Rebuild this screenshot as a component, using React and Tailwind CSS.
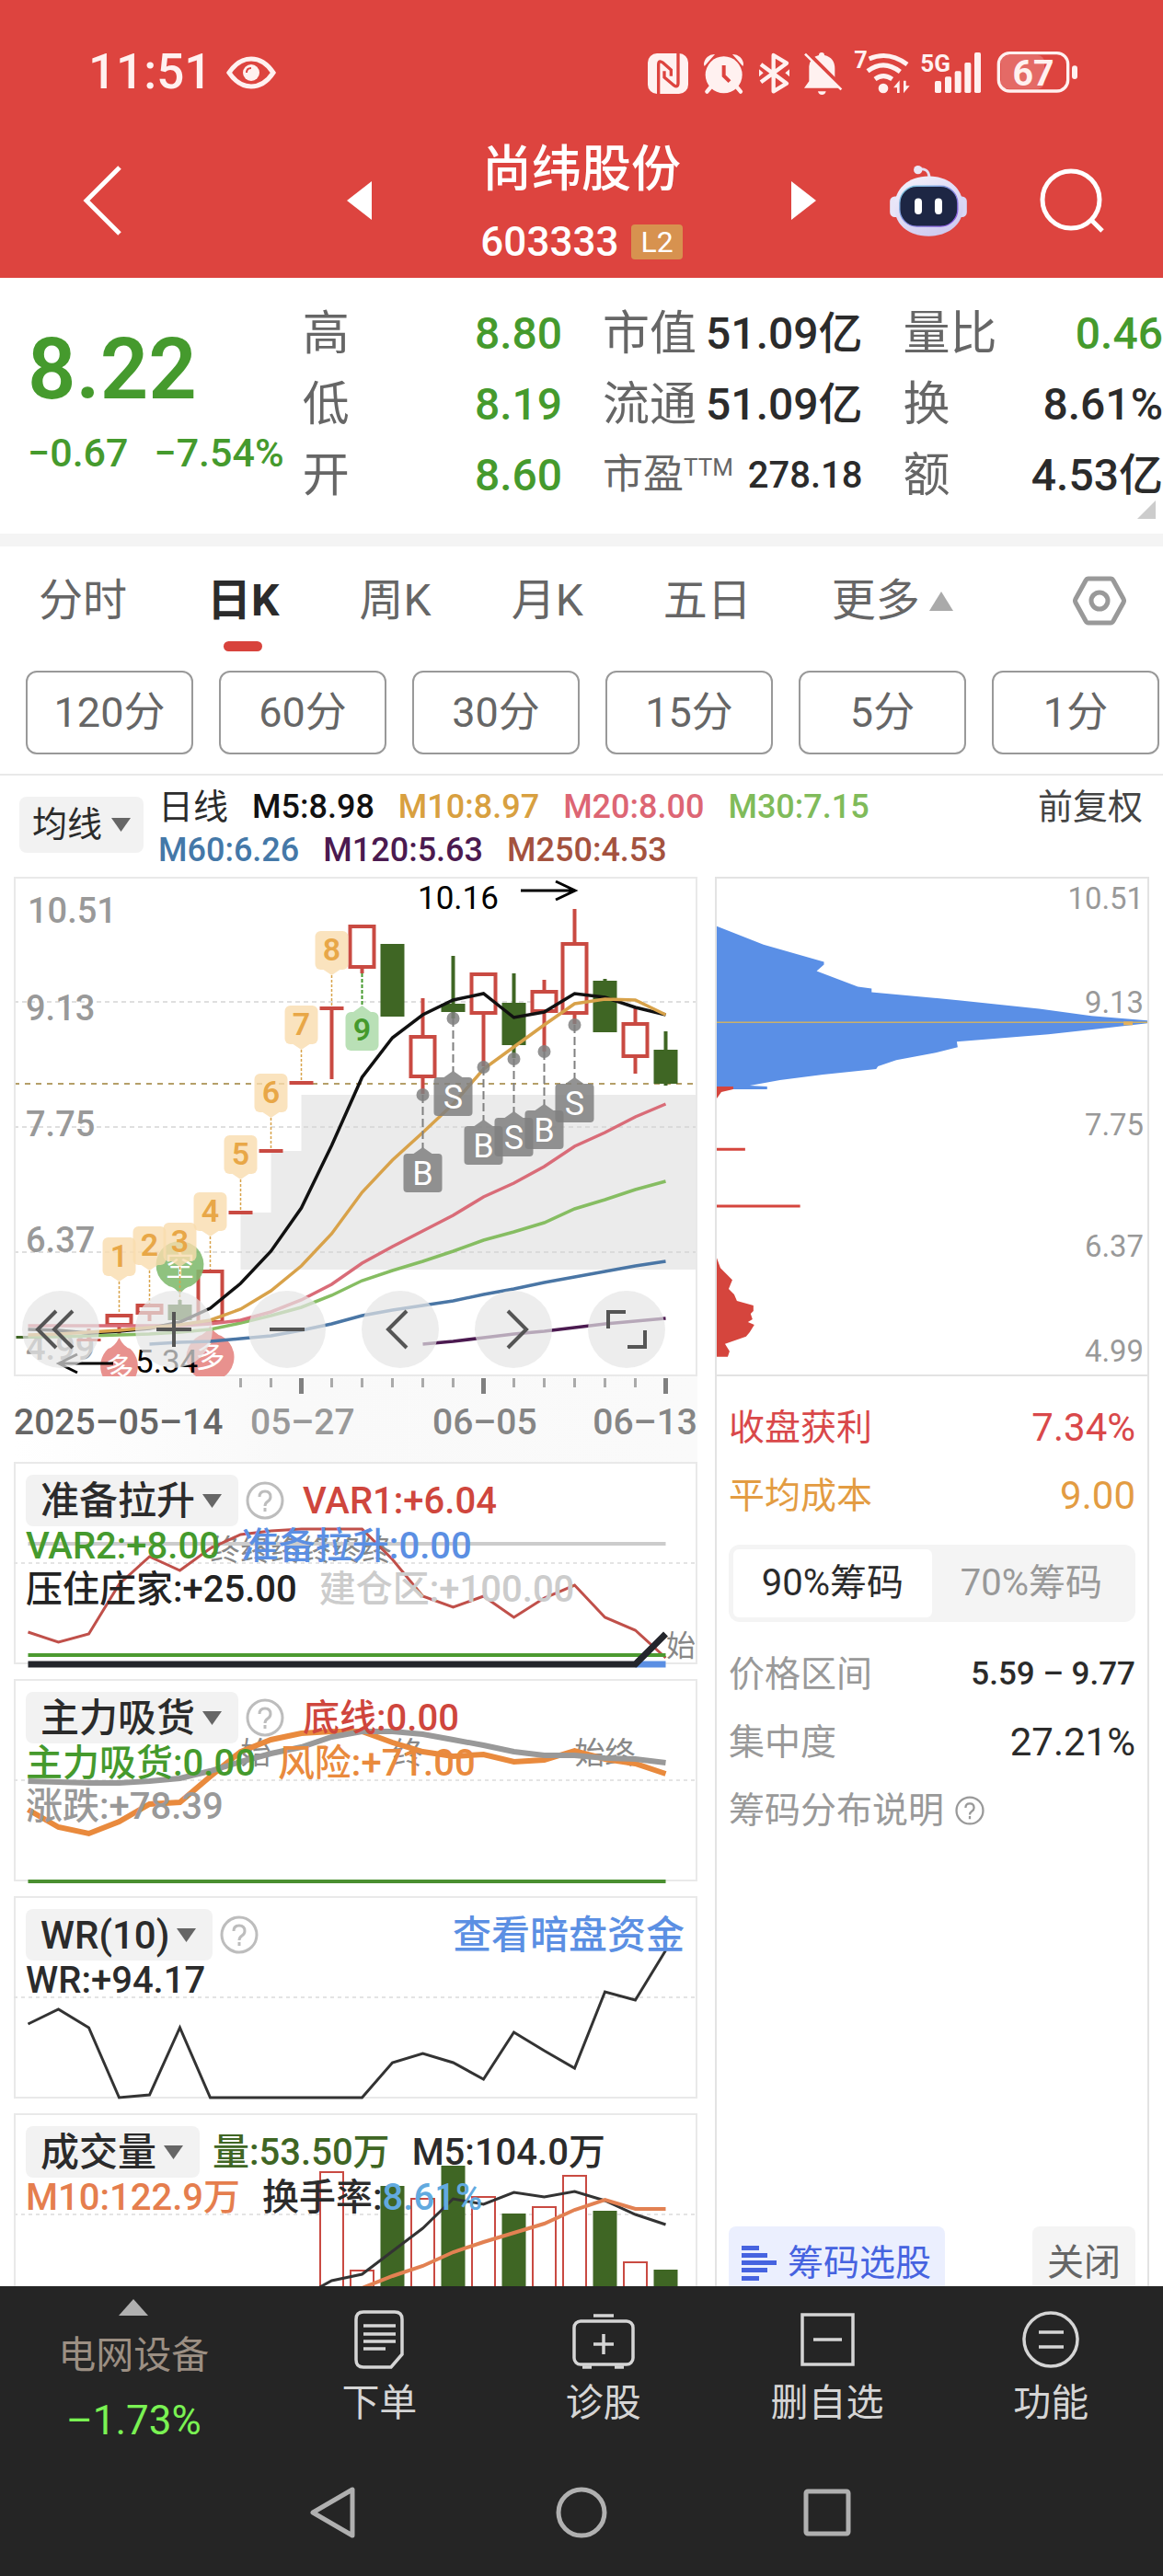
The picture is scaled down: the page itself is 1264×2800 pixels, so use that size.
import React from 'react';
import clsx from 'clsx';

const STEP = 33;
const cx = (i) => 15.5 + STEP * i;
const toPoints = (values, start = 0) => values.map((y, i) => `${cx(i + start)},${y}`).join(' ');

const RED = '#c94a42';
const GREEN = '#3f6624';

const quoteColumns = [
  [
    { label: '高', value: '8.80', up: true },
    { label: '低', value: '8.19', up: true },
    { label: '开', value: '8.60', up: true },
  ],
  [
    { label: '市值', value: '51.09亿' },
    { label: '流通', value: '51.09亿' },
    { label: '市盈', sup: 'TTM', value: '278.18', small: true },
  ],
  [
    { label: '量比', value: '0.46', up: true },
    { label: '换', value: '8.61%' },
    { label: '额', value: '4.53亿' },
  ],
];

const minutes = ['120分', '60分', '30分', '15分', '5分', '1分'];

// [index, body top, body bottom, wick top, wick bottom, kind]
const candles = [
  [0, 499, 502, 499, 502, 'down'],
  [2, 502, 505, 491, 505, 'flat'],
  [3, 475, 488, 475, 497, 'up'],
  [4, 464, 475, 464, 483, 'up'],
  [5, 465, 482, 460, 482, 'down'],
  [6, 427, 485, 427, 485, 'up'],
  [7, 363, 367, 363, 367, 'flat'],
  [8, 296, 300, 296, 300, 'flat'],
  [9, 222, 226, 222, 226, 'flat'],
  [10, 141, 145, 141, 220, 'flat'],
  [11, 52, 99, 52, 105, 'up'],
  [12, 73, 152, 73, 152, 'down'],
  [13, 172, 218, 132, 236, 'up'],
  [14, 138, 147, 86, 154, 'down'],
  [15, 104, 149, 104, 206, 'up'],
  [16, 137, 183, 105, 197, 'down'],
  [17, 123, 147, 112, 190, 'up'],
  [18, 71, 149, 35, 160, 'up'],
  [19, 113, 169, 111, 169, 'down'],
  [20, 158, 196, 143, 214, 'up'],
  [21, 188, 225, 168, 227, 'down'],
];

const averages = [
  { color: '#4a76a5', start: 4, values: [508, 506, 505, 502, 499, 493, 486, 477, 471, 466, 461, 454, 448, 441, 435, 429, 423, 418] },
  { color: '#4b1a50', start: 13, values: [508, 505, 501, 497, 494, 490, 486, 483, 480] },
  { color: '#86bd62', start: 0, values: [500, 500, 499, 498, 497, 495, 492, 485, 477, 468, 455, 439, 428, 418, 407, 395, 386, 376, 361, 351, 340, 331] },
  { color: '#d96c78', start: 0, values: [488, 488, 488, 488, 488, 488, 486, 482, 473, 460, 443, 420, 402, 385, 368, 348, 333, 315, 293, 278, 261, 247] },
  { color: '#111', start: 0, values: [492, 493, 496, 494, 491, 484, 469, 442, 407, 360, 292, 218, 175, 150, 134, 127, 153, 147, 127, 131, 142, 150] },
  { color: '#d8a24a', start: 0, values: [498, 497, 495, 493, 490, 487, 482, 470, 450, 423, 388, 343, 308, 278, 247, 209, 185, 161, 138, 133, 134, 150] },
];

// [index, number, tag top, candle top]
const countTags = [
  [3, 1, 392, 475],
  [4, 2, 380, 464],
  [5, 3, 376, 460],
  [6, 4, 343, 427],
  [7, 5, 281, 363],
  [8, 6, 214, 296],
  [9, 7, 140, 222],
  [10, 8, 59, 141],
];

// [index, letter, box top, dot y]
const signals = [
  [13, 'B', 301, 237],
  [14, 'S', 218, 154],
  [15, 'B', 271, 207],
  [16, 'S', 262, 198],
  [17, 'B', 254, 190],
  [18, 'S', 225, 161],
];

const volumes = [
  [10, 64, 'up'],
  [11, 171, 'up'],
  [12, 79, 'down'],
  [13, 93, 'up'],
  [14, 57, 'down'],
  [15, 91, 'up'],
  [16, 109, 'down'],
  [17, 102, 'up'],
  [18, 68, 'up'],
  [19, 106, 'down'],
  [20, 162, 'up'],
  [21, 170, 'down'],
];

const StatusIcons = () => (
  <svg className="h-[50px] w-[468px] overflow-visible" viewBox="39 42 1404 150" fill="#fff1f0" aria-hidden="true">
    <rect x="39" y="54" width="132" height="132" rx="30" />
    <path
      d="M74 188V92q0-18 14-8l27 24v20M138 52v98q0 18-14 8l-31-26v-20"
      fill="none"
      stroke="#dd443f"
      strokeWidth="10"
    />
    <circle cx="287" cy="124" r="60" />
    <path d="M246 162l-14 17M328 162l14 17" stroke="#fff1f0" strokeWidth="13" strokeLinecap="round" />
    <path d="M222 90a34 34 0 0 1 36-33l-34 39zM351 90a34 34 0 0 0-36-33l34 39z" />
    <path d="M287 93v34l19 19" fill="none" stroke="#dd443f" strokeWidth="12" />
    <path d="M408 90l84 62-43 26V60l43 26-84 62" fill="none" stroke="#fff1f0" strokeWidth="13" strokeLinejoin="round" />
    <path d="M402 106v24l14-12zM501 106v24l-14-12z" />
    <path d="M549 167l16-22V96q4-30 32-36 0-9 9-9t9 9q34 8 34 44v42l16 21z" />
    <path d="M594 178h26q-2 11-13 11t-13-11z" />
    <path d="M556 48l122 122" stroke="#dd443f" strokeWidth="14" />
    <path d="M552 56l118 116" stroke="#fff1f0" strokeWidth="8" />
    <text x="712" y="101" fontSize="76" fontWeight="700">7</text>
    <path d="M761 72q62-28 124 18M756 112q52-40 106 2M780 138q27-20 56 0" fill="none" stroke="#fff1f0" strokeWidth="15" />
    <circle cx="807" cy="168" r="16" />
    <path d="M840 166l20-24v41h-8v-17zM893 160l-20 24v-41h8v17z" />
    <text x="928" y="114" fontSize="78" fontWeight="700">5G</text>
    <rect x="975" y="144" width="21" height="39" rx="5" />
    <rect x="1008" y="130" width="21" height="53" rx="5" />
    <rect x="1040" y="112" width="21" height="71" rx="5" />
    <rect x="1072" y="84" width="21" height="99" rx="5" />
    <rect x="1104" y="51" width="21" height="132" rx="5" />
    <rect x="1190" y="60" width="142" height="110" rx="22" fillOpacity="0.22" />
    <rect x="1183" y="53" width="226" height="124" rx="36" fill="none" stroke="#fff1f0" strokeWidth="10" />
    <rect x="1422" y="94" width="18" height="44" rx="9" />
    <text x="1296" y="160" fontSize="118" fontWeight="700" textAnchor="middle">67</text>
  </svg>
);

const Robot = () => (
  <svg className="h-[79px] w-[86px]" viewBox="78 48 258 238" aria-hidden="true">
    <defs>
      <linearGradient id="shell" x1="0" y1="0" x2="0.6" y2="1">
        <stop offset="0" stopColor="#f6f3fc" />
        <stop offset="1" stopColor="#cfcbf0" />
      </linearGradient>
      <linearGradient id="rim" x1="0" y1="0" x2="1" y2="1">
        <stop offset="0" stopColor="#7fd0e0" />
        <stop offset="1" stopColor="#8a4be0" />
      </linearGradient>
    </defs>
    <path d="M172 64q36-8 38 26" fill="none" stroke="#e6def2" strokeWidth="9" />
    <circle cx="173" cy="65" r="14" fill="#eae6f6" />
    <rect x="81" y="152" width="40" height="68" rx="16" fill="#e8e5f7" />
    <rect x="292" y="152" width="41" height="68" rx="16" fill="#d9d6f5" />
    <path d="M208 86c70 0 113 44 113 100s-46 96-113 96S96 244 96 186 140 86 208 86z" fill="url(#shell)" />
    <rect x="113" y="118" width="190" height="132" rx="56" fill="#1d2644" stroke="url(#rim)" strokeWidth="4" />
    <rect x="162" y="158" width="24" height="53" rx="12" fill="#fff" />
    <rect x="228" y="158" width="24" height="53" rx="12" fill="#fff" />
  </svg>
);

const Header = () => (
  <header className="bg-[#dd443f] text-white">
    <div className="flex h-[158px] items-center justify-between pr-[92px] pl-24">
      <div className="flex items-center gap-4 text-[53px] font-medium text-[#fff1f0]">
        <span>11:51</span>
        <svg className="h-9 w-[54px]" viewBox="0 0 54 36" fill="none" stroke="#fff1f0" strokeWidth="5" aria-hidden="true">
          <path d="M3 18Q13 3 27 3t24 15Q41 33 27 33T3 18z" />
          <circle cx="27" cy="18" r="9" fill="#fff1f0" stroke="none" />
          <path d="M22 18q0-5 5-5" stroke="#dd443f" strokeWidth="2" />
        </svg>
      </div>
      <StatusIcons />
    </div>
    <div className="grid h-36 grid-cols-[1fr_456px_1fr] grid-rows-1 items-center pb-6">
      <div className="flex items-center justify-between pl-[90px]">
        <button aria-label="返回">
          <svg className="h-[76px] w-[42px]" viewBox="0 0 42 76" fill="none" stroke="#fff" strokeWidth="5" aria-hidden="true">
            <path d="M40 2L4 38l36 36" />
          </svg>
        </button>
        <button aria-label="上一只">
          <svg className="h-[42px] w-[27px]" viewBox="0 0 27 42" fill="#fff" aria-hidden="true"><path d="M27 0v42L0 21z" /></svg>
        </button>
      </div>
      <div className="flex flex-col items-center pt-3">
        <h1 className="text-[54px] leading-[78px] font-medium">尚纬股份</h1>
        <div className="flex items-center gap-3.5 text-[44px] leading-[78px] font-medium">
          <span>603333</span>
          <span className="rounded-sm bg-[#d7924f] px-2.5 text-[32px] leading-[38px] font-normal">L2</span>
        </div>
      </div>
      <div className="flex items-center justify-between pr-16">
        <button aria-label="下一只">
          <svg className="h-[42px] w-[27px]" viewBox="0 0 27 42" fill="#fff" aria-hidden="true"><path d="M0 0v42l27-21z" /></svg>
        </button>
        <button aria-label="助手"><Robot /></button>
        <button aria-label="搜索">
          <svg className="h-[70px] w-[70px]" viewBox="0 0 70 70" fill="none" stroke="#fff" strokeWidth="5" aria-hidden="true">
            <circle cx="34" cy="34" r="31" />
            <path d="M56 56l12 12" />
          </svg>
        </button>
      </div>
    </div>
  </header>
);

const Quote = () => (
  <section className="relative flex h-[278px]">
    <div className="w-[26%] pt-[46px] pl-[30px] text-[#459a2d]">
      <div className="text-[92px] leading-[108px] font-semibold">8.22</div>
      <div className="flex gap-7 text-[43px] leading-[72px] font-medium whitespace-nowrap">
        <span>−0.67</span>
        <span>−7.54%</span>
      </div>
    </div>
    <div className="grid flex-1 grid-cols-3 gap-11 pt-[22px]">
      {quoteColumns.map((rows, c) => (
        <dl key={c}>
          {rows.map((row) => (
            <div key={row.label} className="flex items-center justify-between leading-[77px] whitespace-nowrap">
              <dt className={clsx('flex text-[#666]', row.small ? 'text-[44px]' : 'text-[51px]')}>
                {row.label}
                {row.sup && <span className="-mt-2 text-[26px]">{row.sup}</span>}
              </dt>
              <dd className={clsx('font-medium', row.small ? 'text-[40px]' : 'text-[48px]', row.up ? 'text-[#459a2d]' : 'text-[#2b2b2b]')}>
                {row.value}
              </dd>
            </div>
          ))}
        </dl>
      ))}
    </div>
    <svg className="absolute right-2 bottom-4 size-5" viewBox="0 0 20 20" fill="#ccc" aria-hidden="true"><path d="M20 0v20H0z" /></svg>
  </section>
);

const Periods = () => (
  <section className="border-t-14 border-b-2 border-t-[#f4f4f4] border-b-[#e9e9e9] pb-[21px]">
    <nav className="flex h-[116px] items-center gap-[87px] pt-0.5 pr-10 pl-[42px] text-[48px] text-[#666]">
      <button>分时</button>
      <button className="relative h-full font-bold text-[#2b2b2b]">
        日K
        <span className="absolute bottom-0.5 left-1/2 h-[11px] w-[42px] -translate-x-1/2 rounded-full bg-[#d8433c]" />
      </button>
      <button>周K</button>
      <button>月K</button>
      <button>五日</button>
      <button className="flex items-center gap-2.5">
        更多
        <svg className="h-[21px] w-[26px]" viewBox="0 0 26 21" fill="#aaa" aria-hidden="true"><path d="M13 0l13 21H0z" /></svg>
      </button>
      <button className="ml-auto" aria-label="设置">
        <svg className="h-[54px] w-[58px]" viewBox="0 0 58 54" fill="none" stroke="#999" strokeWidth="5" strokeLinejoin="round" aria-hidden="true">
          <path d="M17 3h24q2 0 3 2l11 20q1 2 0 4L44 49q-1 2-3 2H17q-2 0-3-2L3 29q-1-2 0-4L14 5q1-2 3-2z" />
          <circle cx="29" cy="27" r="9" />
        </svg>
      </button>
    </nav>
    <div className="mt-[19px] flex gap-7 pr-1 pl-7">
      {minutes.map((m) => (
        <button key={m} className="h-[91px] flex-1 rounded-xl border-2 border-[#999] text-[45px] text-[#666]">{m}</button>
      ))}
    </div>
  </section>
);

const Caret = () => (
  <svg className="h-[15px] w-[21px]" viewBox="0 0 21 15" fill="#666" aria-hidden="true"><path d="M0 0h21L10.500 15z" /></svg>
);

const AverageBar = () => (
  <section className="flex h-[110px] items-start pt-[11px] pr-[22px] pl-[21px] text-[36px] leading-[47px] font-medium">
    <button className="mt-3 flex h-[61px] w-[135px] items-center justify-center gap-2.5 rounded-lg bg-[#f2f2f2] text-[38px] font-normal text-[#2b2b2b]">
      均线<Caret />
    </button>
    <div className="ml-4 flex-1">
      <div className="flex gap-[26px]">
        <span className="text-[38px] font-normal text-[#2b2b2b]">日线</span>
        <span className="text-[#111]">M5:8.98</span>
        <span className="text-[#d8a040]">M10:8.97</span>
        <span className="text-[#dd6674]">M20:8.00</span>
        <span className="text-[#80bb5a]">M30:7.15</span>
      </div>
      <div className="flex gap-[26px]">
        <span className="text-[#4478a8]">M60:6.26</span>
        <span className="text-[#4b1a50]">M120:5.63</span>
        <span className="text-[#a4523e]">M250:4.53</span>
      </div>
    </div>
    <button className="text-[38px] font-normal text-[#444]">前复权</button>
  </section>
);

const Candle = ({ data: [i, top, bottom, high, low, kind] }) => {
  const color = kind === 'down' ? GREEN : RED;
  const x = cx(i);
  return (
    <g>
      <path d={`M${x} ${high}V${low}`} stroke={color} strokeWidth="4" />
      {kind === 'up' ? (
        <rect x={x - 13} y={top + 2} width="26" height={bottom - top - 3} fill="#fff" stroke={color} strokeWidth="4" />
      ) : (
        <rect x={x - 13} y={top} width="26" height={bottom - top} fill={color} />
      )}
    </g>
  );
};

const KLine = () => (
  <svg className="block w-full" viewBox="0 0 743 543" aria-label="日K">
    <path d="M246.500 427V365H279.500V298H312.500V237H743V427z" fill="#ebebeb" />
    <path d="M0 136H743M0 272H743M0 408H743" stroke="#d5d5d5" strokeWidth="1.500" strokeDasharray="5 4" />
    <path d="M0 225H743" stroke="#b59f68" strokeWidth="2" strokeDasharray="6 6" />
    <rect x="1" y="1" width="741" height="541" fill="none" stroke="#e9e9e9" strokeWidth="2" />
    <g fill="#999" fontSize="38" fontWeight="500">
      <text x="15" y="50">10.51</text>
      <text x="13" y="156">9.13</text>
      <text x="13" y="282">7.75</text>
      <text x="13" y="408">6.37</text>
      <text x="13" y="525">4.99</text>
    </g>
    {candles.map((c) => <Candle key={c[0]} data={c} />)}
    <g fontSize="32" textAnchor="middle">
      <path d="M180.500 454q-5-8-12-9a26 26 0 1 1 24 0q-7 1-12 9z" fill="#80b96d" fillOpacity="0.88" />
      <text x="180.500" y="434" fill="#fff">空</text>
      <path d="M114.500 501q5 10 12 12a26 26 0 0 1 6 30h-36a26 26 0 0 1 6-30q7-2 12-12z" fill="#e8918e" />
      <text x="114.500" y="546" fill="#fff">多</text>
      <path d="M213.500 488q5 9 12 11a26 26 0 1 1-24 0q7-2 12-11z" fill="#e8918e" />
      <text x="213.500" y="533" fill="#fff">多</text>
    </g>
    {averages.map((a) => (
      <polyline key={a.color} points={toPoints(a.values, a.start)} fill="none" stroke={a.color} strokeWidth="3.500" />
    ))}
    {countTags.map(([i, n, top, end]) => (
      <g key={n}>
        <path d={`M${cx(i)} ${top + 48}V${end}`} stroke="#d8a24a" strokeWidth="1.500" strokeDasharray="3 2" />
        <rect x={cx(i) - 18} y={top} width="36" height="42" rx="6" fill="#f9dcae" fillOpacity="0.8" />
        <path d={`M${cx(i) - 9} ${top + 42}h18l-9 6z`} fill="#f9dcae" fillOpacity="0.8" />
        <text x={cx(i)} y={top + 32} fontSize="34" fontWeight="600" fill="#e8a747" textAnchor="middle">{n}</text>
      </g>
    ))}
    <path d="M378.500 105V140" stroke="#459a2d" strokeWidth="2" strokeDasharray="4 2" />
    <path d="M369 147l9.500-7 9.500 7z" fill="#b9e0b6" />
    <rect x="360.500" y="147" width="36" height="42" rx="6" fill="#b9e0b6" />
    <text x="378.500" y="178" fontSize="34" fontWeight="600" fill="#459a2d" textAnchor="middle">9</text>
    {signals.map(([i, letter, top, dot]) => (
      <g key={i} fill="#808080" fillOpacity="0.85">
        <circle cx={cx(i)} cy={dot} r="7" />
        <path d={`M${cx(i)} ${dot}V${top - 6}`} stroke="#808080" strokeWidth="2" strokeDasharray="9 4" />
        <path d={`M${cx(i) - 10} ${top}l10-7 10 7z`} />
        <rect x={cx(i) - 21} y={top} width="42" height="42" rx="4" />
        <text x={cx(i)} y={top + 34} fontSize="36" fill="#fff" fillOpacity="1" textAnchor="middle">{letter}</text>
      </g>
    ))}
    <g fontSize="35" fill="#000">
      <text x="439" y="35">10.16</text>
      <text x="132" y="539">5.34</text>
    </g>
    <path d="M551 15h58M589 5l21 10-21 10M108 529H50M69 519l-20 10 20 10" fill="none" stroke="#000" strokeWidth="3" />
  </svg>
);

const chartTools = [
  { label: '最左', path: 'M27 23L7 43l20 20M45 23L25 43l20 20', box: '-10 1 84 84' },
  { label: '放大', path: 'M42 23v38M23 42h38', box: '0 0 84 84' },
  { label: '缩小', path: 'M23 42h38', box: '0 0 84 84' },
  { label: '向左', path: 'M49 22L29 42l20 20', box: '0 0 84 84' },
  { label: '向右', path: 'M36 22l20 20-20 20', box: '0 0 84 84' },
  { label: '全屏', path: 'M22 41V23h19M62 43v18H43', box: '0 0 84 84' },
];

const ticks = Array.from({ length: 15 }, (_, k) => k + 7);

const DateAxis = () => (
  <svg className="block w-full" viewBox="0 0 743 93" aria-hidden="true">
    <defs>
      <linearGradient id="shade" x1="0" x2="1" y1="0" y2="0">
        <stop offset="0" stopColor="#fff" />
        <stop offset="0.400" stopColor="#f9f9f9" />
        <stop offset="1" stopColor="#fafafa" />
      </linearGradient>
    </defs>
    <rect width="743" height="93" fill="url(#shade)" />
    {ticks.map((i) => {
      const major = i % 6 === 3;
      return <path key={i} d={`M${cx(i)} 2v${major ? 17 : 10}`} stroke={major ? '#808080' : '#aaa'} strokeWidth={major ? 5 : 3} />;
    })}
    <g fontSize="39" fontWeight="500" fill="#858585">
      <text x="0" y="63" fill="#666">2025–05–14</text>
      <text x="257" y="63" fill="#999">05–27</text>
      <text x="455" y="63">06–05</text>
      <text x="743" y="63" textAnchor="end">06–13</text>
    </g>
  </svg>
);

const Help = ({ className }) => (
  <svg className={className} viewBox="0 0 42 42" fill="none" stroke="currentColor" strokeWidth="3" aria-hidden="true">
    <circle cx="21" cy="21" r="19" />
    <path d="M15 17q0-6 6-6t6 6q0 3-3 5t-3 5M21 29v4" />
  </svg>
);

const Indicator = ({ name, help = true, last, first, lines = [], action, children }) => (
  <article className={clsx('relative border-2 border-[#e9e9e9] text-[40px] leading-[47px] font-medium whitespace-nowrap', last ? 'h-[188px] overflow-hidden border-b-0' : 'h-[220px]')}>
    <svg className="absolute -inset-x-0.5 -top-0.5 h-[220px] w-[calc(100%+4px)] overflow-visible" viewBox="0 0 743 220" aria-hidden="true">
      <path d="M0 110H743" stroke="#e4e4e4" strokeWidth="2" strokeDasharray="4 4" />
      {children}
    </svg>
    <div className="relative pt-3.5 pr-3 pl-[11px]">
      <div className="flex h-[52px] items-center gap-2">
        <button className="flex h-14 items-center gap-2 rounded-lg bg-[#f2f2f2] pr-[18px] pl-4 text-[42px] font-medium text-[#2b2b2b]">
          {name}<Caret />
        </button>
        {help && <Help className="size-[42px] text-[#bdbdbd]" />}
        <div className={clsx('flex gap-6', help ? 'ml-3' : 'ml-1.5')}>{first}</div>
        {action && <a href="#funds" className="ml-auto text-[42px] text-[#5b8fe3]">{action}</a>}
      </div>
      {lines.map((line, i) => (
        <div key={i} className="flex gap-6">{line}</div>
      ))}
    </div>
  </article>
);

const Indicators = () => (
  <div className="flex flex-col gap-4">
    <Indicator
      name="准备拉升"
      first={<span className="text-[#cf463d]">VAR1:+6.04</span>}
      lines={[
        <>
          <span className="text-[#459a2d]">VAR2:+8.00</span>
          <span className="text-[#5b8fe3]">准备拉升:0.00</span>
        </>,
        <>
          <span className="text-[#222]">压住庄家:+25.00</span>
          <span className="text-[#ccc]">建仓区:+100.00</span>
        </>,
      ]}
    >
      <g fontSize="32" fontWeight="400" fill="#888">
        {[6, 7, 8, 9, 10, 11].map((i) => <text key={i} x={cx(i)} y="107">终</text>)}
        <text x="709" y="211">始</text>
      </g>
      <path d="M15.500 89H708.500" stroke="#ccc" strokeWidth="4" />
      <polyline points={toPoints([185, 196, 187, 133, 103, 118, 94, 79, 75, 73, 73, 73, 106, 146, 158, 146, 169, 148, 134, 169, 183, 213])} fill="none" stroke="#c0504a" strokeWidth="3" />
      <path d="M15.500 210H708.500" stroke="#4c9a30" strokeWidth="4" />
      <path d="M675.500 220H708.500" stroke="#5b8fe3" strokeWidth="7" />
      <path d="M15.500 220H675.500L708.500 187" fill="none" stroke="#24262c" strokeWidth="7" />
    </Indicator>

    <Indicator
      name="主力吸货"
      first={<span className="text-[#cf463d]">底线:0.00</span>}
      lines={[
        <>
          <span className="text-[#459a2d]">主力吸货:0.00</span>
          <span className="text-[#e98a3d]">风险:+71.00</span>
        </>,
        <span className="text-[#999]">涨跌:+78.39</span>,
      ]}
    >
      <g fontSize="33" fontWeight="400" fill="#888">
        <text x={cx(7)} y="92">始</text>
        <text x={cx(12)} y="92">终</text>
        <text x={cx(18)} y="92">始</text>
        <text x={cx(19)} y="92">终</text>
      </g>
      <polyline points={toPoints([142, 161, 168, 155, 136, 134, 106, 79, 66, 59, 57, 57, 69, 79, 84, 82, 90, 88, 78, 87, 92, 103])} fill="none" stroke="#e98a3d" strokeWidth="6" />
      <polyline points={toPoints([111, 112, 113, 113, 111, 108, 100, 90, 81, 74, 63, 57, 57, 60, 66, 72, 79, 83, 83, 86, 87, 91])} fill="none" stroke="#999" strokeWidth="6" />
      <path d="M15.500 220H708.500" stroke="#4a8f30" strokeWidth="4" />
    </Indicator>

    <Indicator
      name="WR(10)"
      action="查看暗盘资金"
      lines={[<span className="text-[#2b2b2b]">WR:+94.17</span>]}
    >
      <polyline points={toPoints([139, 123, 143, 219, 216, 143, 219, 219, 219, 219, 219, 219, 181, 171, 181, 199, 148, 168, 187, 104, 113, 59])} fill="none" stroke="#333" strokeWidth="3" />
    </Indicator>

    <Indicator
      name="成交量"
      help={false}
      last
      first={
        <>
          <span className="text-[#3f6624]">量:53.50万</span>
          <span className="text-[#2b2b2b]">M5:104.0万</span>
        </>
      }
      lines={[
        <>
          <span className="text-[#e57e4e]">M10:122.9万</span>
          <span className="text-[#2b2b2b]">换手率:<span className="text-[#62aadf]">8.61%</span></span>
        </>,
      ]}
    >
      {volumes.map(([i, top, kind]) =>
        kind === 'up' ? (
          <rect key={i} x={cx(i) - 12.5} y={top} width="25" height={230 - top} fill="#fff" stroke="#c94a42" strokeWidth="2" />
        ) : (
          <rect key={i} x={cx(i) - 13} y={top} width="26" height={230 - top} fill={GREEN} />
        )
      )}
      <polyline points={toPoints([200, 182, 175, 150, 125, 93, 99, 86, 91, 85, 95, 110, 121], 9)} fill="none" stroke="#333" strokeWidth="3" />
      <polyline points={toPoints([190, 177, 166, 151, 140, 130, 120, 105, 94, 104, 104], 11)} fill="none" stroke="#e28152" strokeWidth="4" />
    </Indicator>
  </div>
);

const ChipChart = () => (
  <svg className="block w-full" viewBox="0 0 470 541" aria-label="筹码分布">
    <path
      d="M0 52L51 72 117 91V94L109 101 154 118 169 120V124L266 133 352 142 409 150 470 155V158L426 163 362 170 262 178 263 184 239 190 196 198 176 205 174 208 116 214 69 220 36 226 55 227V230H0z"
      fill="#5a8fe6"
    />
    <path d="M0 157H470" stroke="#c9b06a" strokeWidth="1.500" />
    <rect x="444" y="156" width="10" height="4" fill="#e3b15c" />
    <path
      d="M0 227H18V230L5 233 0 240zM0 294H31V297H0zM0 356H91V359H0zM0 414L4 425 17 438 13 448 19 454 22 461 40 466V472L37 475 39 481 34 484 41 487 36 495 32 500 9 508 14 516 12 522H0z"
      fill="#d5453d"
    />
    <g fontSize="33" fill="#999" textAnchor="end">
      <text x="466" y="33">10.51</text>
      <text x="466" y="147">9.13</text>
      <text x="466" y="280">7.75</text>
      <text x="466" y="413">6.37</text>
      <text x="466" y="527">4.99</text>
    </g>
  </svg>
);

const ChipPanel = () => (
  <aside className="flex flex-col border-2 border-b-0 border-[#e3e3e3]">
    <ChipChart />
    <div className="flex flex-1 flex-col border-t-2 border-[#e3e3e3] px-[13px] pt-[19px] text-[39px] leading-[74px] text-[#999]">
      <div className="flex justify-between text-[#d9484a]">
        <span>收盘获利</span>
        <span className="text-[42px]">7.34%</span>
      </div>
      <div className="flex justify-between text-[#e39c42]">
        <span>平均成本</span>
        <span className="text-[42px]">9.00</span>
      </div>
      <div className="mt-4 mb-5 grid h-[84px] grid-cols-2 rounded-xl bg-[#f4f4f4] p-[5px]">
        <button className="rounded-md bg-white text-[40px] text-[#2b2b2b]">90%筹码</button>
        <button className="text-[40px]">70%筹码</button>
      </div>
      <div className="flex justify-between">
        <span>价格区间</span>
        <span className="text-[35px] font-medium text-[#2b2b2b]">5.59 – 9.77</span>
      </div>
      <div className="flex justify-between">
        <span>集中度</span>
        <span className="text-[42px] text-[#2b2b2b]">27.21%</span>
      </div>
      <button className="flex items-center gap-3">
        筹码分布说明<Help className="size-8" />
      </button>
      <div className="mt-auto flex h-[65px] justify-between">
        <button className="flex items-center gap-3 rounded-t-lg bg-[#ebeffe] pt-3.5 pr-[15px] pl-3.5 text-[#4663e0]">
          <svg className="h-[38px] w-[38px]" viewBox="0 0 38 38" fill="#4663e0" aria-hidden="true">
            <path d="M0 0h19v5H0zM0 8h28v5H0zM0 16h38v5H0zM0 24h28v5H0zM0 33h19v5H0z" />
          </svg>
          筹码选股
        </button>
        <button className="flex items-center rounded-t-lg bg-[#f4f4f4] px-4 pt-3.5 text-[40px] text-[#666]">关闭</button>
      </div>
    </div>
  </aside>
);

const footerItems = [
  {
    label: '下单',
    icon: (
      <>
        <path d="M11 2h34q8 0 8 8v38L41 62H11q-8 0-8-8V10q0-8 8-8z" />
        <path d="M11 17h35M11 26h35M11 34h35M11 42h24" />
      </>
    ),
  },
  {
    label: '诊股',
    icon: (
      <>
        <rect x="-4" y="12" width="64" height="47" rx="7" />
        <path d="M17 6h22M28 26v22M17 37h22M5 62h10M40 62h10" />
      </>
    ),
  },
  {
    label: '删自选',
    icon: (
      <>
        <rect x="1" y="5" width="55" height="54" />
        <path d="M13 32h31" />
      </>
    ),
  },
  {
    label: '功能',
    icon: (
      <>
        <circle cx="28" cy="32" r="29" />
        <path d="M15 24h27M15 40h27" />
      </>
    ),
  },
];

const Footer = () => (
  <footer className="bg-[#252525] text-[41px] text-[#d5d5d5]">
    <nav className="flex h-[177px]">
      <a href="#sector" className="flex w-[23%] flex-col items-center pt-3.5 text-[#9c8f83]">
        <svg className="h-[18px] w-8 shrink-0" viewBox="0 0 32 18" fill="#b0b0b0" aria-hidden="true"><path d="M16 0l16 18H0z" /></svg>
        <span className="mt-2 leading-[71px]">电网设备</span>
        <span className="text-[44px] leading-[71px] text-[#7af253]">–1.73%</span>
      </a>
      {footerItems.map((item) => (
        <button key={item.label} className="flex flex-1 flex-col items-center pt-[26px]">
          <svg className="h-16 w-14 overflow-visible" viewBox="0 0 56 64" fill="none" stroke="#d5d5d5" strokeWidth="3.500" aria-hidden="true">
            {item.icon}
          </svg>
          <span className="leading-[74px]">{item.label}</span>
        </button>
      ))}
    </nav>
    <div className="flex h-[138px] items-center justify-center gap-[213px]">
      <button aria-label="后退">
        <svg className="size-14" viewBox="0 0 56 56" fill="none" stroke="#b0b0b0" strokeWidth="5" strokeLinejoin="round" aria-hidden="true"><path d="M48 3v50L5 28z" /></svg>
      </button>
      <button aria-label="主页">
        <svg className="size-14" viewBox="0 0 56 56" fill="none" stroke="#b0b0b0" strokeWidth="5" aria-hidden="true"><circle cx="28" cy="28" r="25" /></svg>
      </button>
      <button aria-label="最近任务">
        <svg className="size-14" viewBox="0 0 56 56" fill="none" stroke="#b0b0b0" strokeWidth="5" aria-hidden="true"><rect x="3" y="5" width="46" height="46" rx="2" /></svg>
      </button>
    </div>
  </footer>
);

const App = () => {
  return (
    <div className="overflow-hidden bg-white font-['Roboto','Noto_Sans_CJK_SC',sans-serif]">
      <Header />
      <Quote />
      <Periods />
      <AverageBar />
      <main className="grid grid-cols-[743fr_472fr] gap-[19px] px-[15px]">
        <div>
          <div className="relative">
            <KLine />
            <div className="absolute bottom-[9px] left-[9px] flex gap-[39px]">
              {chartTools.map((tool) => (
                <button key={tool.label} aria-label={tool.label} className="size-[84px] rounded-full bg-[#e6e6e6]/70">
                  <svg viewBox={tool.box} fill="none" stroke="#555" strokeWidth="4" aria-hidden="true"><path d={tool.path} /></svg>
                </button>
              ))}
            </div>
          </div>
          <DateAxis />
          <Indicators />
        </div>
        <ChipPanel />
      </main>
      <Footer />
    </div>
  );
};

export default App;
